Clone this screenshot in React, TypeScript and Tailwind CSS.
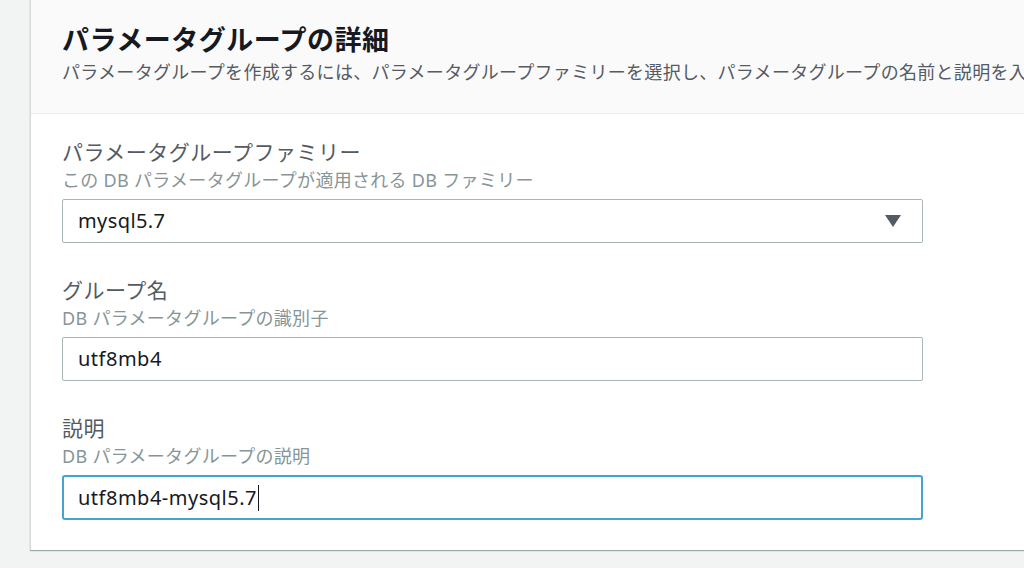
import React from 'react';

const font = { fontFamily: '"Noto Sans", "Noto Sans CJK JP", sans-serif' };

const Field: React.FC<{ label: string; desc: string; children: React.ReactNode; first?: boolean }> = ({ label, desc, children, first }) => (
  <div className={first ? '' : 'mt-[34px]'}>
    <div className="text-[21px] leading-[26px] tracking-[0.5px] text-[#545b64] whitespace-nowrap">{label}</div>
    <div className="mt-[4px] text-[18px] leading-[22px] tracking-[0.3px] text-[#879596] whitespace-nowrap">{desc}</div>
    <div className="mt-[8px]">{children}</div>
  </div>
);

export default function App() {
  return (
    <div className="w-[1024px] h-[568px] overflow-hidden bg-[#f2f3f3]" style={font}>
      <div className="ml-[30px] w-[1100px] bg-white border-l border-[#d5dbdb] shadow-[0_1px_1px_0_rgba(0,28,36,0.35)]">
        <div className="bg-[#fafafa] border-b border-[#eaeded] pl-[31px] pt-[22px] pb-[28px]">
          <h2 className="text-[27px] leading-[36px] tracking-[0.5px] font-bold text-[#16191f] whitespace-nowrap">パラメータグループの詳細</h2>
          <p className="mt-[1px] text-[18px] leading-[26px] tracking-[0.3px] text-[#545b64] whitespace-nowrap">
            パラメータグループを作成するには、パラメータグループファミリーを選択し、パラメータグループの名前と説明を入力します。
          </p>
        </div>
        <div className="pl-[31px] pt-[25px] pb-[30px]">
          <Field first label="パラメータグループファミリー" desc="この DB パラメータグループが適用される DB ファミリー">
            <div className="w-[861px] h-[44px] border border-[#aab7b8] rounded-[2px] flex items-center justify-between pl-[15px] pr-[21px]">
              <span className="text-[20px] tracking-[0.4px] text-[#16191f]">mysql5.7</span>
              <svg width="16" height="12" viewBox="0 0 16 12">
                <path d="M0 0h16L8 12z" fill="#545b64" />
              </svg>
            </div>
          </Field>
          <Field label="グループ名" desc="DB パラメータグループの識別子">
            <div className="w-[861px] h-[44px] border border-[#aab7b8] rounded-[2px] flex items-center pl-[15px]">
              <span className="text-[20px] tracking-[0.5px] text-[#16191f]">utf8mb4</span>
            </div>
          </Field>
          <Field label="説明" desc="DB パラメータグループの説明">
            <div className="w-[861px] h-[45px] border-2 border-[#44a3cf] rounded-[3px] flex items-center pl-[14px]">
              <span className="text-[20px] tracking-[0.5px] text-[#16191f]">utf8mb4-mysql5.7</span>
              <span className="ml-[1px] w-[1px] h-[26px] bg-[#16191f]" />
            </div>
          </Field>
        </div>
      </div>
    </div>
  );
}
